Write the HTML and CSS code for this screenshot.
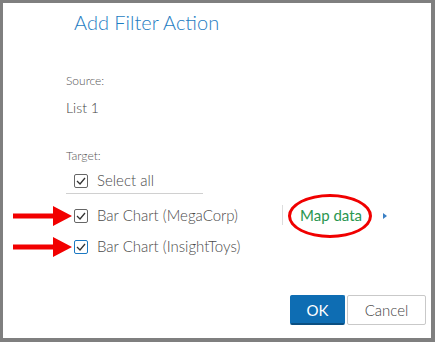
FILE: index.html
```html
<!DOCTYPE html>
<html lang="en">

<head>
    <meta charset="UTF-8">
    <meta name="viewport" content="width=device-width, initial-scale=1.0">
    <title>Add Filter Action</title>
    <link rel="stylesheet" href="styles.css">
</head>

<body>
    <div class="dialog">
        <h1 class="title">Add Filter Action</h1>

        <div class="form">
            <div class="label">Source:</div>
            <div class="source">List 1</div>

            <div class="label target">Target:</div>
            <div class="select-all">
                <span class="check">
                    <svg width="10" height="8" viewBox="0 0 10 8"><polyline points="1,4 4,7 9,1" /></svg>
                </span>
                <span class="text">Select all</span>
            </div>

            <div class="row">
                <svg class="arrow" width="60" height="20" viewBox="0 0 60 20"><polygon points="0,7.5 40,7.5 40,0 59,10 40,20 40,12.5 0,12.5" /></svg>
                <span class="check">
                    <svg width="10" height="8" viewBox="0 0 10 8"><polyline points="1,4 4,7 9,1" /></svg>
                </span>
                <span class="text">Bar Chart (MegaCorp)</span>
                <div class="map">
                    <span class="map-link">Map data</span>
                    <span class="caret"></span>
                </div>
            </div>

            <div class="row">
                <svg class="arrow" width="60" height="20" viewBox="0 0 60 20"><polygon points="0,7.5 40,7.5 40,0 59,10 40,20 40,12.5 0,12.5" /></svg>
                <span class="check focus">
                    <svg width="10" height="8" viewBox="0 0 10 8"><polyline points="1,4 4,7 9,1" /></svg>
                </span>
                <span class="text">Bar Chart (InsightToys)</span>
            </div>
        </div>

        <div class="footer">
            <button class="btn ok">OK</button>
            <button class="btn cancel">Cancel</button>
        </div>
    </div>
</body>

</html>
```

FILE: styles.css
```css
body {
    margin: 0;
    background: #7f7f7f;
    font-family: Lato, "Open Sans", sans-serif;
    font-weight: 300;
    color: #444;
}

.dialog {
    margin: 3px 4px 0 3px;
    height: 335px;
    background: #fff;
    display: flex;
    flex-direction: column;
}

.title {
    margin: 7px 0 0 71px;
    font-size: 20px;
    font-weight: 300;
    line-height: 24px;
    color: #1e7cc2;
}

.form {
    padding: 0 44px 0 63px;
}

.label {
    margin-top: 40px;
    font-size: 12px;
    line-height: 14px;
    color: #555;
}

.source {
    margin-top: 11px;
    font-size: 14px;
    line-height: 17px;
    color: #444;
}

.target {
    margin-top: 33px;
}

.select-all {
    margin-top: 4px;
    width: 129px;
    height: 26px;
    padding-left: 8px;
    display: flex;
    align-items: center;
    border-bottom: 1px solid #d0d0d0;
}

.row {
    position: relative;
    height: 31px;
    padding-left: 8px;
    display: flex;
    align-items: center;
}

.select-all + .row {
    margin-top: 5px;
}

.check {
    width: 12px;
    height: 12px;
    margin-top: 2px;
    border: 1px solid #666;
    border-radius: 2px;
    display: flex;
    align-items: center;
    justify-content: center;
}

.check svg {
    fill: none;
    stroke: #333;
    stroke-width: 1.3;
}

.check.focus {
    border-color: #1b78c2;
}

.text {
    margin-left: 9px;
    font-size: 15px;
    color: #4a4a4a;
}

.arrow {
    position: absolute;
    left: -53px;
    top: 7px;
    fill: #f20000;
}

.map {
    margin-left: auto;
    height: 20px;
    padding-left: 17px;
    border-left: 1px solid #ddd;
    display: flex;
    align-items: center;
}

.map-link {
    position: relative;
    font-size: 15px;
    font-weight: 400;
    color: #2a9650;
}

.map-link::after {
    content: "";
    position: absolute;
    left: -12px;
    right: -10px;
    top: -12px;
    bottom: -14px;
    border: 3px solid #f00000;
    border-radius: 50%;
}

.caret {
    margin-left: 21px;
    margin-top: 2px;
    width: 0;
    height: 0;
    border-top: 3.5px solid transparent;
    border-bottom: 3.5px solid transparent;
    border-left: 4px solid #3a7fc4;
}

.footer {
    margin-top: auto;
    padding: 0 5px 13px 0;
    display: flex;
    justify-content: flex-end;
    gap: 2px;
}

.btn {
    height: 30px;
    font-family: Lato, "Open Sans", sans-serif;
    font-size: 15px;
    border-radius: 2px;
}

.ok {
    width: 55px;
    background: #0e6db3;
    color: #fff;
    font-weight: 400;
    border: 1px solid #0e6db3;
    border-bottom: 2px solid #0a4f82;
}

.cancel {
    width: 79px;
    background: #fff;
    color: #444;
    font-weight: 300;
    border: 1px solid #c9c9c9;
}
```
